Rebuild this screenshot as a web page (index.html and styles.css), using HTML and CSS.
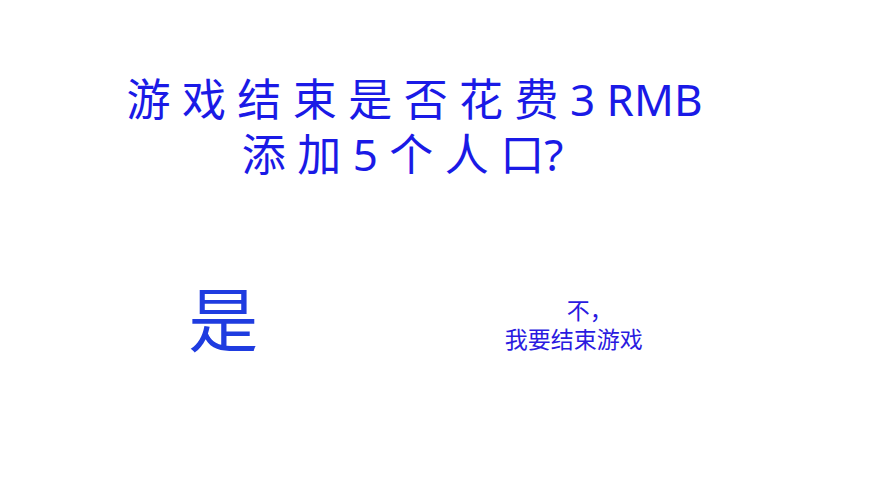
FILE: index.html
```html
<!DOCTYPE html>
<html lang="zh-CN">
<head>
<meta charset="utf-8">
<title>游戏结束</title>
<link rel="stylesheet" href="styles.css">
</head>
<body>
<main class="dialog">
<h1 class="question">游 戏 结 束 是 否 花 费 3 RMB<br><span class="question-end">添 加 5 个 人 口?</span></h1>
<div class="choices">
<button class="choice yes" type="button">是</button>
<button class="choice no" type="button"><span class="no-lead">不，</span><br>我要结束游戏</button>
</div>
</main>
</body>
</html>
```

FILE: styles.css
```css
* {
  box-sizing: border-box;
}

body {
  margin: 0;
  background: #fff;
  font-family: "Noto Sans", "Noto Sans CJK SC", sans-serif;
}

.dialog {
  padding: 72px 40px 40px 0;
}

.question {
  margin: 0;
  color: #1a1ae6;
  font-size: 44px;
  font-weight: 400;
  line-height: 55px;
  text-align: center;
}

.question-end {
  padding-right: 24px;
}

.choices {
  display: grid;
  grid-template-columns: 1fr 1fr;
  align-items: center;
  margin: 88px 80px 0 48px;
}

.choice {
  padding: 0;
  border: 0;
  background: none;
  font-family: inherit;
  cursor: pointer;
}

.yes {
  color: #1f3ce0;
  font-size: 70px;
  line-height: 100px;
}

.no {
  padding-top: 10px;
  color: #2a1ae0;
  font-size: 23px;
  line-height: 29px;
}

.no-lead {
  padding-left: 32px;
}
```
